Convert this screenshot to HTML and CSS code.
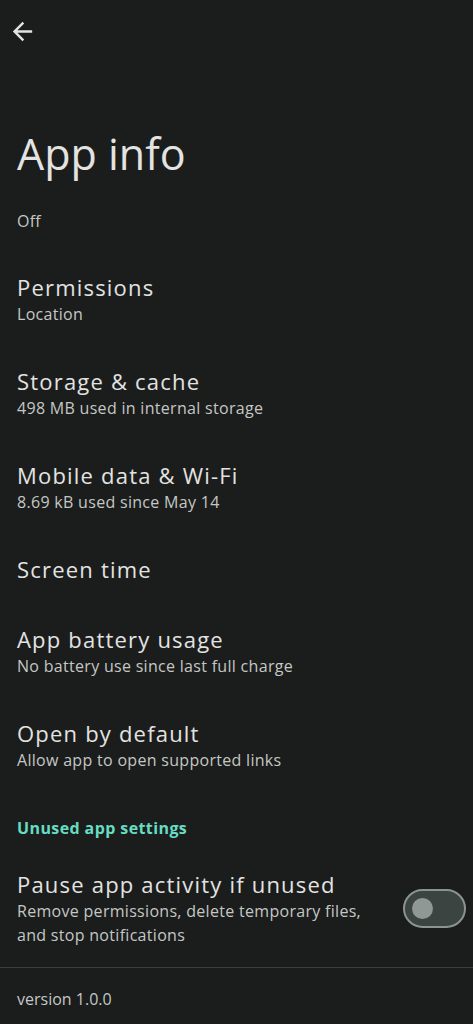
FILE: index.html
```html
<!DOCTYPE html>
<html lang="en">
<head>
<meta charset="utf-8">
<title>App info</title>
<link rel="stylesheet" href="styles.css">
</head>
<body>
<div class="screen">
  <header class="topbar">
    <svg class="back" viewBox="0 0 24 24" width="29" height="29" aria-hidden="true">
      <path d="M20 11H7.83l5.59-5.59L12 4l-8 8 8 8 1.41-1.41L7.83 13H20v-2z" fill="#e3e3e1"/>
    </svg>
  </header>

  <h1 class="page-title">App info</h1>
  <div class="status">Off</div>

  <ul class="list">
    <li class="item">
      <div class="item-title">Permissions</div>
      <div class="item-sub">Location</div>
    </li>
    <li class="item">
      <div class="item-title">Storage &amp; cache</div>
      <div class="item-sub">498 MB used in internal storage</div>
    </li>
    <li class="item">
      <div class="item-title">Mobile data &amp; Wi-Fi</div>
      <div class="item-sub">8.69 kB used since May 14</div>
    </li>
    <li class="item">
      <div class="item-title">Screen time</div>
    </li>
    <li class="item">
      <div class="item-title">App battery usage</div>
      <div class="item-sub">No battery use since last full charge</div>
    </li>
    <li class="item">
      <div class="item-title">Open by default</div>
      <div class="item-sub">Allow app to open supported links</div>
    </li>
  </ul>

  <div class="category">Unused app settings</div>

  <div class="item item-switch">
    <div class="item-text">
      <div class="item-title">Pause app activity if unused</div>
      <div class="item-sub">Remove permissions, delete temporary files, and stop notifications</div>
    </div>
    <div class="switch"><span class="knob"></span></div>
  </div>

  <div class="divider"></div>

  <div class="version">version 1.0.0</div>
</div>
</body>
</html>
```

FILE: styles.css
```css
* { box-sizing: border-box; }

html, body {
  margin: 0;
  padding: 0;
  background: #1b1d1c;
}

body {
  font-family: "Open Sans", "Noto Sans", sans-serif;
  color: #e3e3e1;
}

.screen {
  width: 473px;
  min-height: 1024px;
  background: #1b1d1c;
  overflow: hidden;
}

.topbar {
  height: 64px;
  padding: 17px 0 0 8px;
}

.back {
  display: block;
}

.page-title {
  margin: 64px 0 0 0;
  padding-left: 17px;
  font-size: 43px;
  line-height: 52px;
  font-weight: 400;
  color: #e3e3e1;
}

.status {
  margin-top: 29px;
  padding-left: 17px;
  font-size: 16px;
  line-height: 24px;
  letter-spacing: 0.2px;
  color: #c4c7c5;
}

.list {
  list-style: none;
  margin: 19px 0 0 0;
  padding: 0;
}

.item {
  padding: 21px 17px 20px 17px;
}

.item-title {
  font-size: 22px;
  line-height: 29px;
  letter-spacing: 1.2px;
  color: #e3e3e1;
}

.item-sub {
  font-size: 16px;
  line-height: 24px;
  letter-spacing: 0.3px;
  color: #c4c7c5;
}

.category {
  padding: 24px 17px 9px 17px;
  font-size: 16px;
  line-height: 24px;
  font-weight: 700;
  letter-spacing: 0.4px;
  color: #66dcc2;
}

.item-switch {
  display: flex;
  align-items: center;
  gap: 24px;
  padding-right: 7px;
}

.item-text {
  flex: 1;
  min-width: 0;
}

.switch {
  flex: none;
  width: 63px;
  height: 39px;
  border: 2.5px solid #8a9490;
  border-radius: 20px;
  background: #3b4441;
  display: flex;
  align-items: center;
  padding-left: 6.5px;
}

.knob {
  display: block;
  width: 21px;
  height: 21px;
  border-radius: 50%;
  background: #8f9894;
}

.divider {
  height: 1px;
  background: #3a3d3c;
}

.version {
  padding: 19px 17px 0 17px;
  font-size: 16px;
  line-height: 24px;
  color: #c4c7c5;
}
```
